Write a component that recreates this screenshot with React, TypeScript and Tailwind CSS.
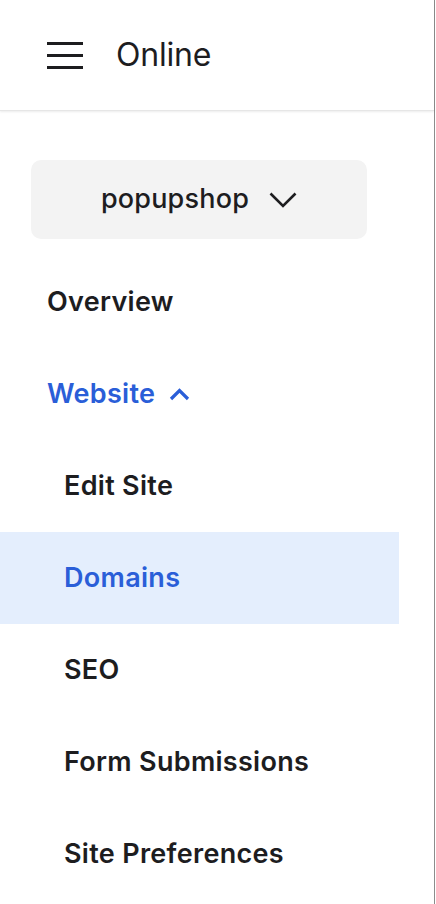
import { useState } from "react";

const SUB_ITEMS = ["Edit Site", "Domains", "SEO", "Form Submissions", "Site Preferences"];

export default function App() {
  const [active, setActive] = useState("Domains");

  return (
    <div className="h-[904px] w-[436px] overflow-hidden bg-white font-['Inter',sans-serif] text-[#1d1d1f]">
      <div className="flex h-full w-[435px] flex-col border-r border-[#8c8c8c]">
        <header className="flex h-[111px] shrink-0 items-center gap-[33px] pl-[47px] shadow-[0_1px_2px_rgba(0,0,0,0.08)] border-b border-[#e6e6e6]">
          <div className="flex w-[36px] flex-col gap-[9px]">
            <span className="block h-[3px] bg-[#1d1d1f]" />
            <span className="block h-[3px] bg-[#1d1d1f]" />
            <span className="block h-[3px] bg-[#1d1d1f]" />
          </div>
          <h1 className="text-[32px] font-normal tracking-[-0.2px]">Online</h1>
        </header>

        <div className="flex flex-col">
          <div className="pl-[31px] pt-[49px] pb-[17px]">
            <button className="flex h-[79px] w-[336px] items-center justify-center gap-[20px] rounded-[10px] bg-[#f3f3f3] text-[27px] font-medium tracking-[0.2px]">
              popupshop
              <svg width="28" height="16" viewBox="0 0 28 16" fill="none">
                <path d="M1.5 1.5 L14 14 L26.5 1.5" stroke="#1d1d1f" strokeWidth="2.6" />
              </svg>
            </button>
          </div>

          <NavRow label="Overview" indent={47} />
          <div className="flex h-[92px] w-[399px] items-center gap-[14px] pl-[47px] text-[27px] font-semibold tracking-[0.3px] text-[#2a5ed8]">
            Website
            <svg width="21" height="13" viewBox="0 0 21 13" fill="none">
              <path d="M2 11 L10.5 2.5 L19 11" stroke="#2a5ed8" strokeWidth="3.2" />
            </svg>
          </div>
          {SUB_ITEMS.map((item) => (
            <NavRow
              key={item}
              label={item}
              indent={64}
              active={item === active}
              onClick={() => setActive(item)}
            />
          ))}
        </div>
      </div>
    </div>
  );
}

function NavRow({
  label,
  indent,
  active = false,
  onClick,
}: {
  label: string;
  indent: number;
  active?: boolean;
  onClick?: () => void;
}) {
  return (
    <div
      onClick={onClick}
      className={`flex h-[92px] w-[399px] items-center text-[27px] font-semibold tracking-[0.3px] ${
        indent === 64 ? "pl-[64px]" : "pl-[47px]"
      } ${active ? "bg-[#e4eefd] text-[#2a5ed8]" : ""}`}
    >
      {label}
    </div>
  );
}
